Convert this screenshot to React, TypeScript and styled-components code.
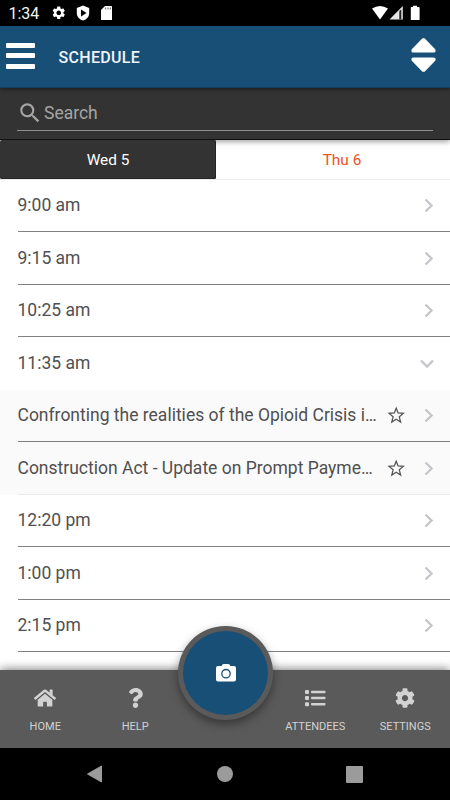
import React from "react";
import styled, { createGlobalStyle } from "styled-components";
import { MdSettings, MdSearch } from "react-icons/md";
import { FaHome, FaQuestion, FaCog } from "react-icons/fa";

const GlobalStyle = createGlobalStyle`
  * { box-sizing: border-box; }
  body { margin: 0; background: #fff; font-family: Roboto, sans-serif; overflow: hidden; }
`;

const Screen = styled.div`
  width: 450px;
  height: 800px;
  display: flex;
  flex-direction: column;
  background: #fff;
  overflow: hidden;
`;

const StatusBar = styled.div`
  flex: none;
  height: 26px;
  background: #000;
  color: #fff;
  display: flex;
  align-items: center;
  padding: 0 29px 0 8.5px;
`;
const Clock = styled.span`
  width: 42px;
  font-size: 16px;
  line-height: 26px;
  padding-top: 2px;
  color: #f4f4f4;
`;
const StatusIcons = styled.div`
  display: flex;
  align-items: center;
  gap: 10px;
  svg { display: block; }
`;
const Signals = styled.div`
  margin-left: auto;
  display: flex;
  svg { display: block; }
`;

const Header = styled.header`
  flex: none;
  height: 62px;
  background: #174f77;
  border-bottom: 1px solid #123f60;
  display: flex;
  align-items: center;
  padding: 0 14px 0 6px;
  position: relative;
  z-index: 3;
  box-shadow: 0 1px 4px rgba(0, 0, 0, 0.5);
  > svg { display: block; margin-top: -3px; }
`;
const MenuButton = styled.div`
  width: 29px;
  display: flex;
  flex-direction: column;
  gap: 5.5px;
  margin-top: -2px;
`;
const MenuBar = styled.div`
  height: 5px;
  border-radius: 1px;
  background: #fff;
`;
const Title = styled.h1`
  margin: 2px auto 0 23.5px;
  font-size: 16px;
  font-weight: 500;
  line-height: 20px;
  letter-spacing: 0.3px;
  color: #f0f4f7;
`;

const SearchPanel = styled.div`
  flex: none;
  height: 52px;
  background: #333;
  border-bottom: 1px solid #111;
  padding: 9px 17px 0;
  position: relative;
  z-index: 2;
  box-shadow: 0 2px 5px rgba(0, 0, 0, 0.35);
`;
const SearchField = styled.div`
  height: 34px;
  border-bottom: 1px solid #8f8f8f;
  padding-bottom: 1px;
  display: flex;
  align-items: center;
  color: #a5a5a5;
  font-size: 17.5px;
  line-height: 32px;
  svg { display: block; margin-right: 1px; }
`;

const Tabs = styled.div`
  flex: none;
  height: 39.5px;
  display: flex;
  border-bottom: 1px solid #ececec;
`;
const Tab = styled.div<{ $active?: boolean }>`
  width: ${(p) => (p.$active ? "216px" : "234px")};
  height: 39px;
  display: flex;
  align-items: center;
  justify-content: center;
  padding-left: ${(p) => (p.$active ? "0" : "18px")};
  font-size: 15.4px;
  letter-spacing: 0;
  border-radius: 2px;
  position: relative;
  z-index: ${(p) => (p.$active ? 3 : 0)};
  background: ${(p) => (p.$active ? "#333" : "transparent")};
  box-shadow: ${(p) => (p.$active ? "inset 0 -1px 0 #242424, inset -1px 0 0 #242424" : "none")};
  color: ${(p) => (p.$active ? "#fff" : "#f0501e")};
`;

const List = styled.div`
  flex: 1;
  min-height: 0;
  overflow: hidden;
`;
const Row = styled.div<{ $session?: boolean }>`
  height: 52.5px;
  padding-left: 17.5px;
  background: ${(p) => (p.$session ? "#fafafa" : "#fff")};
`;
const RowInner = styled.div<{ $line: string }>`
  height: 52.5px;
  display: flex;
  align-items: center;
  border-bottom: 1px solid ${(p) => p.$line};
  padding-right: 15px;
`;
const RowLabel = styled.div<{ $session?: boolean }>`
  width: ${(p) => (p.$session ? "360px" : "auto")};
  font-size: 17.5px;
  line-height: 24px;
  letter-spacing: 0;
  color: #505050;
  white-space: nowrap;
`;
const StarIcon = styled.svg`
  display: block;
  margin-left: 9.5px;
`;
const Chevron = styled.svg<{ $down?: boolean }>`
  display: block;
  margin-left: auto;
  transform: ${(p) => (p.$down ? "translate(-2px, 1px) rotate(90deg)" : "translateY(0.5px)")};
`;

const Footer = styled.nav`
  flex: none;
  height: 78px;
  background: #5a5a5a;
  display: grid;
  grid-template-columns: repeat(5, 90px);
  position: relative;
  z-index: 2;
  box-shadow: 0 -1px 9px rgba(0, 0, 0, 0.5);
`;
const NavItem = styled.div`
  display: flex;
  flex-direction: column;
  align-items: center;
  padding-top: 16px;
  padding-left: 0.5px;
  color: #d2d2d2;
  font-size: 11px;
  svg { display: block; height: 24px; }
`;
const NavLabel = styled.span`
  margin-top: 10px;
  line-height: 14px;
`;
const CameraButton = styled.div`
  position: absolute;
  left: 178px;
  top: -44px;
  width: 95px;
  height: 94px;
  border-radius: 50%;
  border: 5.5px solid #5a5a5a;
  background: #174f77;
  display: flex;
  align-items: center;
  justify-content: center;
  box-shadow: 0 4px 10px rgba(0, 0, 0, 0.4);
`;

const SystemBar = styled.div`
  flex: none;
  height: 52px;
  background: #000;
  display: grid;
  grid-template-columns: 130px 130px 130px;
  justify-content: center;
  justify-items: center;
  align-items: center;
  position: relative;
  z-index: 1;
  svg { display: block; }
`;

type Entry = { label: string; session?: boolean; open?: boolean; line?: string };

const entries: Entry[] = [
  { label: "9:00 am" },
  { label: "9:15 am" },
  { label: "10:25 am" },
  { label: "11:35 am", open: true, line: "transparent" },
  { label: "Confronting the realities of the Opioid Crisis i…", session: true },
  { label: "Construction Act - Update on Prompt Payme…", session: true, line: "#ebebeb" },
  { label: "12:20 pm" },
  { label: "1:00 pm" },
  { label: "2:15 pm" },
];

const Star = () => (
  <StarIcon width="18" height="18" viewBox="0 0 18 18" fill="none" stroke="#555" strokeWidth="1.3">
    <path d="M9.200 2.200 11.100 7 16.300 7.400 12.300 10.800 13.600 16 9.200 13.200 4.800 16 6.100 10.800 2.100 7.400 7.300 7Z" />
  </StarIcon>
);

const ListIcon = () => (
  <svg width="22" height="24" viewBox="0 0 22 24" fill="currentColor">
    {[4, 10, 16.2].map((y) => (
      <g key={y}>
        <rect x="1" y={y} width="4" height="4" rx="1" />
        <rect x="7" y={y + 0.8} width="14.5" height="2.4" rx="0.8" />
      </g>
    ))}
  </svg>
);

export default function App() {
  return (
    <>
      <GlobalStyle />
      <Screen>
        <StatusBar>
          <Clock>1:34</Clock>
          <StatusIcons>
            <MdSettings size={15.5} />
            <svg width="14" height="16" viewBox="0 0 14 16">
              <path d="M7 .5 13.2 3v5c0 3.5-2.4 6.4-6.2 7.6C3.200 14.400.8 11.500.8 8V3Z" fill="#fff" />
              <path d="M5 4.500 10.500 8 5 11.500Z" fill="#000" />
            </svg>
            <svg width="13" height="16" viewBox="0 0 13 16">
              <path d="M5 1h6.500q.5 0 .5.5v13q0 .5-.5.5h-10q-.5 0-.5-.5V5Z" fill="#fff" />
              <path d="M5.500 2.500v2M8 2.500v2M10.300 2.500v2" stroke="#777" strokeWidth="1.2" />
            </svg>
          </StatusIcons>
          <Signals>
            <svg width="50" height="16" viewBox="371 5 50 16">
              <path d="M372 8.500Q380 3.500 388 8.500L380 19.500Z" fill="#fff" />
              <path d="M402.800 6v13.500H389.500Z" fill="#e6e6e6" />
              <path d="M399.300 11v8.500h2V9.500Z" fill="#222" />
              <path d="M413 5.800h4V7h2q.6 0 .6.600v11.800q0 .6-.6.600h-7.600q-.6 0-.6-.6V7.600q0-.6.600-.6H413Z" fill="#fff" />
            </svg>
          </Signals>
        </StatusBar>
        <Header>
          <MenuButton>
            <MenuBar />
            <MenuBar />
            <MenuBar />
          </MenuButton>
          <Title>SCHEDULE</Title>
          <svg width="26" height="36" viewBox="0 0 26 36" fill="#fff" stroke="#fff" strokeWidth="2" strokeLinejoin="round">
            <path d="M12.900 2.300 14.100 2.300 24.500 13Q25 14.600 23.500 14.600H3.500Q2 14.600 2.500 13Z" />
            <path d="M12.900 33.700 14.100 33.700 24.500 23Q25 21.400 23.500 21.400H3.500Q2 21.400 2.500 23Z" />
          </svg>
        </Header>
        <SearchPanel>
          <SearchField>
            <MdSearch size={26} />
            Search
          </SearchField>
        </SearchPanel>
        <Tabs>
          <Tab $active>Wed 5</Tab>
          <Tab>Thu 6</Tab>
        </Tabs>
        <List>
          {entries.map((e) => (
            <Row key={e.label} $session={e.session}>
              <RowInner $line={e.line ?? "#808080"}>
                <RowLabel $session={e.session}>{e.label}</RowLabel>
                {e.session && <Star />}
                <Chevron $down={e.open} width="12" height="16" viewBox="0 0 12 16" fill="none" stroke="#c5c5ca" strokeWidth="2.300">
                  <path d="M2.500 2 8.600 8 2.500 14" />
                </Chevron>
              </RowInner>
            </Row>
          ))}
        </List>
        <Footer>
          <NavItem>
            <FaHome size={22} />
            <NavLabel>HOME</NavLabel>
          </NavItem>
          <NavItem>
            <FaQuestion size={15} />
            <NavLabel>HELP</NavLabel>
          </NavItem>
          <NavItem />
          <NavItem>
            <ListIcon />
            <NavLabel>ATTENDEES</NavLabel>
          </NavItem>
          <NavItem>
            <FaCog size={20} />
            <NavLabel>SETTINGS</NavLabel>
          </NavItem>
          <CameraButton>
            <svg width="22" height="20" viewBox="0 0 22 20">
              <path d="M3 3h3.500L7.500 1.500Q8 1 8.700 1h4.600q.7 0 1.200.5L15.500 3H19q2 0 2 2v11.500q0 2-2 2H3q-2 0-2-2V5Q1 3 3 3Z" fill="#fff" />
              <circle cx="11" cy="10.700" r="4.200" fill="#fff" stroke="#174f77" strokeWidth="1.300" />
            </svg>
          </CameraButton>
        </Footer>
        <SystemBar>
          <svg width="18" height="18" viewBox="0 0 18 18"><path d="M15.500 1v16L1.500 9Z" fill="#9b9b9b" stroke="#9b9b9b" strokeLinejoin="round" /></svg>
          <svg width="16" height="16" viewBox="0 0 16 16"><circle cx="8" cy="8" r="8" fill="#9b9b9b" /></svg>
          <svg width="18" height="17" viewBox="0 0 18 17"><rect width="17" height="17" rx="1" fill="#9b9b9b" /></svg>
        </SystemBar>
      </Screen>
    </>
  );
}
